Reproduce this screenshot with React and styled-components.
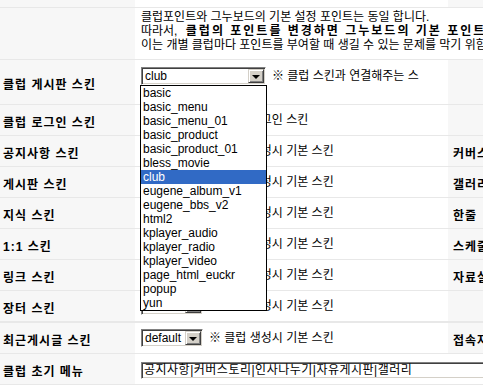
import styled, { createGlobalStyle } from 'styled-components';

const GlobalStyle = createGlobalStyle`
  html, body {
    margin: 0;
    padding: 0;
    background: #fff;
    overflow: hidden;
  }
  body {
    font-family: "Liberation Sans", "Noto Sans CJK KR", sans-serif;
    font-size: 12px;
    color: #000;
  }
`;

const Table = styled.div`
  width: 1000px;
  display: flex;
  flex-direction: column;
`;

const Row = styled.div`
  display: grid;
  grid-template-columns: 135px 313px 130px 1fr;
  height: ${(p) => p.$h || 30}px;
  border-bottom: ${(p) => (p.$thick ? 2 : 1)}px solid #e8e8e8;
`;

const Label = styled.div`
  background: #f7f7f7;
  font-weight: bold;
  letter-spacing: 1px;
  padding-left: ${(p) => (p.$side ? 5 : 3)}px;
  padding-top: 2px;
  display: flex;
  align-items: center;
  white-space: nowrap;
  overflow: hidden;
`;

const Value = styled.div`
  grid-column: span ${(p) => p.$span || 1};
  display: flex;
  align-items: ${(p) => (p.$top ? 'flex-start' : 'center')};
  padding-left: 6px;
  padding-top: ${(p) => p.$pt || 0}px;
  white-space: nowrap;
`;

const Notice = styled.div`
  line-height: 14px;
`;

const Strong = styled.b`
  margin-left: 3px;
  letter-spacing: 2px;
`;

const Line = styled.div`
  display: flex;
  align-items: center;
`;

const Note = styled.span`
  margin-left: 6px;
  line-height: 14px;
`;

const Select = styled.div`
  position: relative;
  box-sizing: border-box;
  width: ${(p) => p.$w}px;
  height: 18px;
  flex-shrink: 0;
  display: flex;
  align-items: center;
  background: #fff;
  border: 1px solid;
  border-color: #808080 #ffffff #ffffff #808080;
  box-shadow: inset 1px 1px 0 #404040, inset -1px -1px 0 #d4d0c8;
`;

const SelectText = styled.span`
  flex: 1;
  padding-left: 3px;
  line-height: 14px;
  overflow: hidden;
`;

const ArrowButton = styled.span`
  box-sizing: border-box;
  width: 16px;
  height: 14px;
  margin-right: 1px;
  background: #d4d0c8;
  border: 1px solid;
  border-color: #d4d0c8 #404040 #404040 #d4d0c8;
  box-shadow: inset 1px 1px 0 #fff, inset -1px -1px 0 #808080;
  display: flex;
  align-items: center;
  justify-content: center;

  &::after {
    content: '';
    border-left: 4px solid transparent;
    border-right: 4px solid transparent;
    border-top: 4px solid #000;
    margin-top: 1px;
  }
`;

const OptionList = styled.ul`
  position: absolute;
  top: 17px;
  left: -2px;
  z-index: 10;
  box-sizing: border-box;
  width: 127px;
  margin: 0;
  padding: 0;
  list-style: none;
  background: #fff;
  border: 1px solid #000;
`;

const Option = styled.li`
  height: 14px;
  line-height: 14px;
  padding-left: 2px;
  background: ${(p) => (p.$active ? '#316ac5' : '#fff')};
  color: ${(p) => (p.$active ? '#fff' : '#000')};
`;

const TextInput = styled.div`
  box-sizing: border-box;
  width: 600px;
  height: 17px;
  margin-top: 1px;
  padding-left: 2px;
  line-height: 14px;
  letter-spacing: 0.5px;
  background: #fff;
  border: 1px solid;
  border-color: #808080 #ffffff #ffffff #808080;
  box-shadow: inset 1px 1px 0 #404040, inset -1px -1px 0 #d4d0c8;
`;

const skins = [
  'basic', 'basic_menu', 'basic_menu_01', 'basic_product', 'basic_product_01',
  'bless_movie', 'club', 'eugene_album_v1', 'eugene_bbs_v2', 'html2',
  'kplayer_audio', 'kplayer_radio', 'kplayer_video', 'page_html_euckr', 'popup', 'yun',
];

const skinRows = [
  { label: '클럽 로그인 스킨', note: '※ 클럽 로그인 스킨', side: '' },
  { label: '공지사항 스킨', note: '※ 클럽 생성시 기본 스킨', side: '커버스토리 스킨' },
  { label: '게시판 스킨', note: '※ 클럽 생성시 기본 스킨', side: '갤러리 스킨' },
  { label: '지식 스킨', note: '※ 클럽 생성시 기본 스킨', side: '한줄' },
  { label: '1:1 스킨', note: '※ 클럽 생성시 기본 스킨', side: '스케줄 스킨' },
  { label: '링크 스킨', note: '※ 클럽 생성시 기본 스킨', side: '자료실 스킨' },
  { label: '장터 스킨', note: '※ 클럽 생성시 기본 스킨', side: '', thick: true },
  { label: '최근게시글 스킨', note: '※ 클럽 생성시 기본 스킨', side: '접속자 스킨' },
];

function SkinSelect({ value, width, open }) {
  return (
    <Select $w={width}>
      <SelectText>{value}</SelectText>
      <ArrowButton />
      {open && (
        <OptionList>
          {skins.map((s) => (
            <Option key={s} $active={s === value}>{s}</Option>
          ))}
        </OptionList>
      )}
    </Select>
  );
}

export default function App() {
  return (
    <>
      <GlobalStyle />
      <Table>
        <Row $h={7}>
          <Label />
          <Value />
          <Label $side />
          <Value />
        </Row>
        <Row $h={51}>
          <Label />
          <Value $span={3} $top $pt={2}>
            <Notice>
              클럽포인트와 그누보드의 기본 설정 포인트는 동일 합니다.
              <br />
              따라서,<Strong> 클럽의 포인트를 변경하면 그누보드의 기본 포인트도 같이 변경됩니다.</Strong>
              <br />
              이는 개별 클럽마다 포인트를 부여할 때 생길 수 있는 문제를 막기 위함입니다.
            </Notice>
          </Value>
        </Row>
        <Row $h={44}>
          <Label>클럽 게시판 스킨</Label>
          <Value $top $pt={7}>
            <div>
              <Line>
                <SkinSelect value="club" width={125} open />
                <Note>※ 클럽 스킨과 연결해주는 스</Note>
              </Line>
              <Note as="div">킨입니다.</Note>
            </div>
          </Value>
          <Label $side />
          <Value />
        </Row>
        {skinRows.map((r) => (
          <Row key={r.label} $thick={r.thick}>
            <Label>{r.label}</Label>
            <Value>
              <SkinSelect value="default" width={62} />
              <Note>{r.note}</Note>
            </Value>
            <Label $side>{r.side}</Label>
            <Value />
          </Row>
        ))}
        <Row>
          <Label>클럽 초기 메뉴</Label>
          <Value $span={3} $top $pt={7}>
            <TextInput>공지사항|커버스토리|인사나누기|자유게시판|갤러리</TextInput>
          </Value>
        </Row>
      </Table>
    </>
  );
}
